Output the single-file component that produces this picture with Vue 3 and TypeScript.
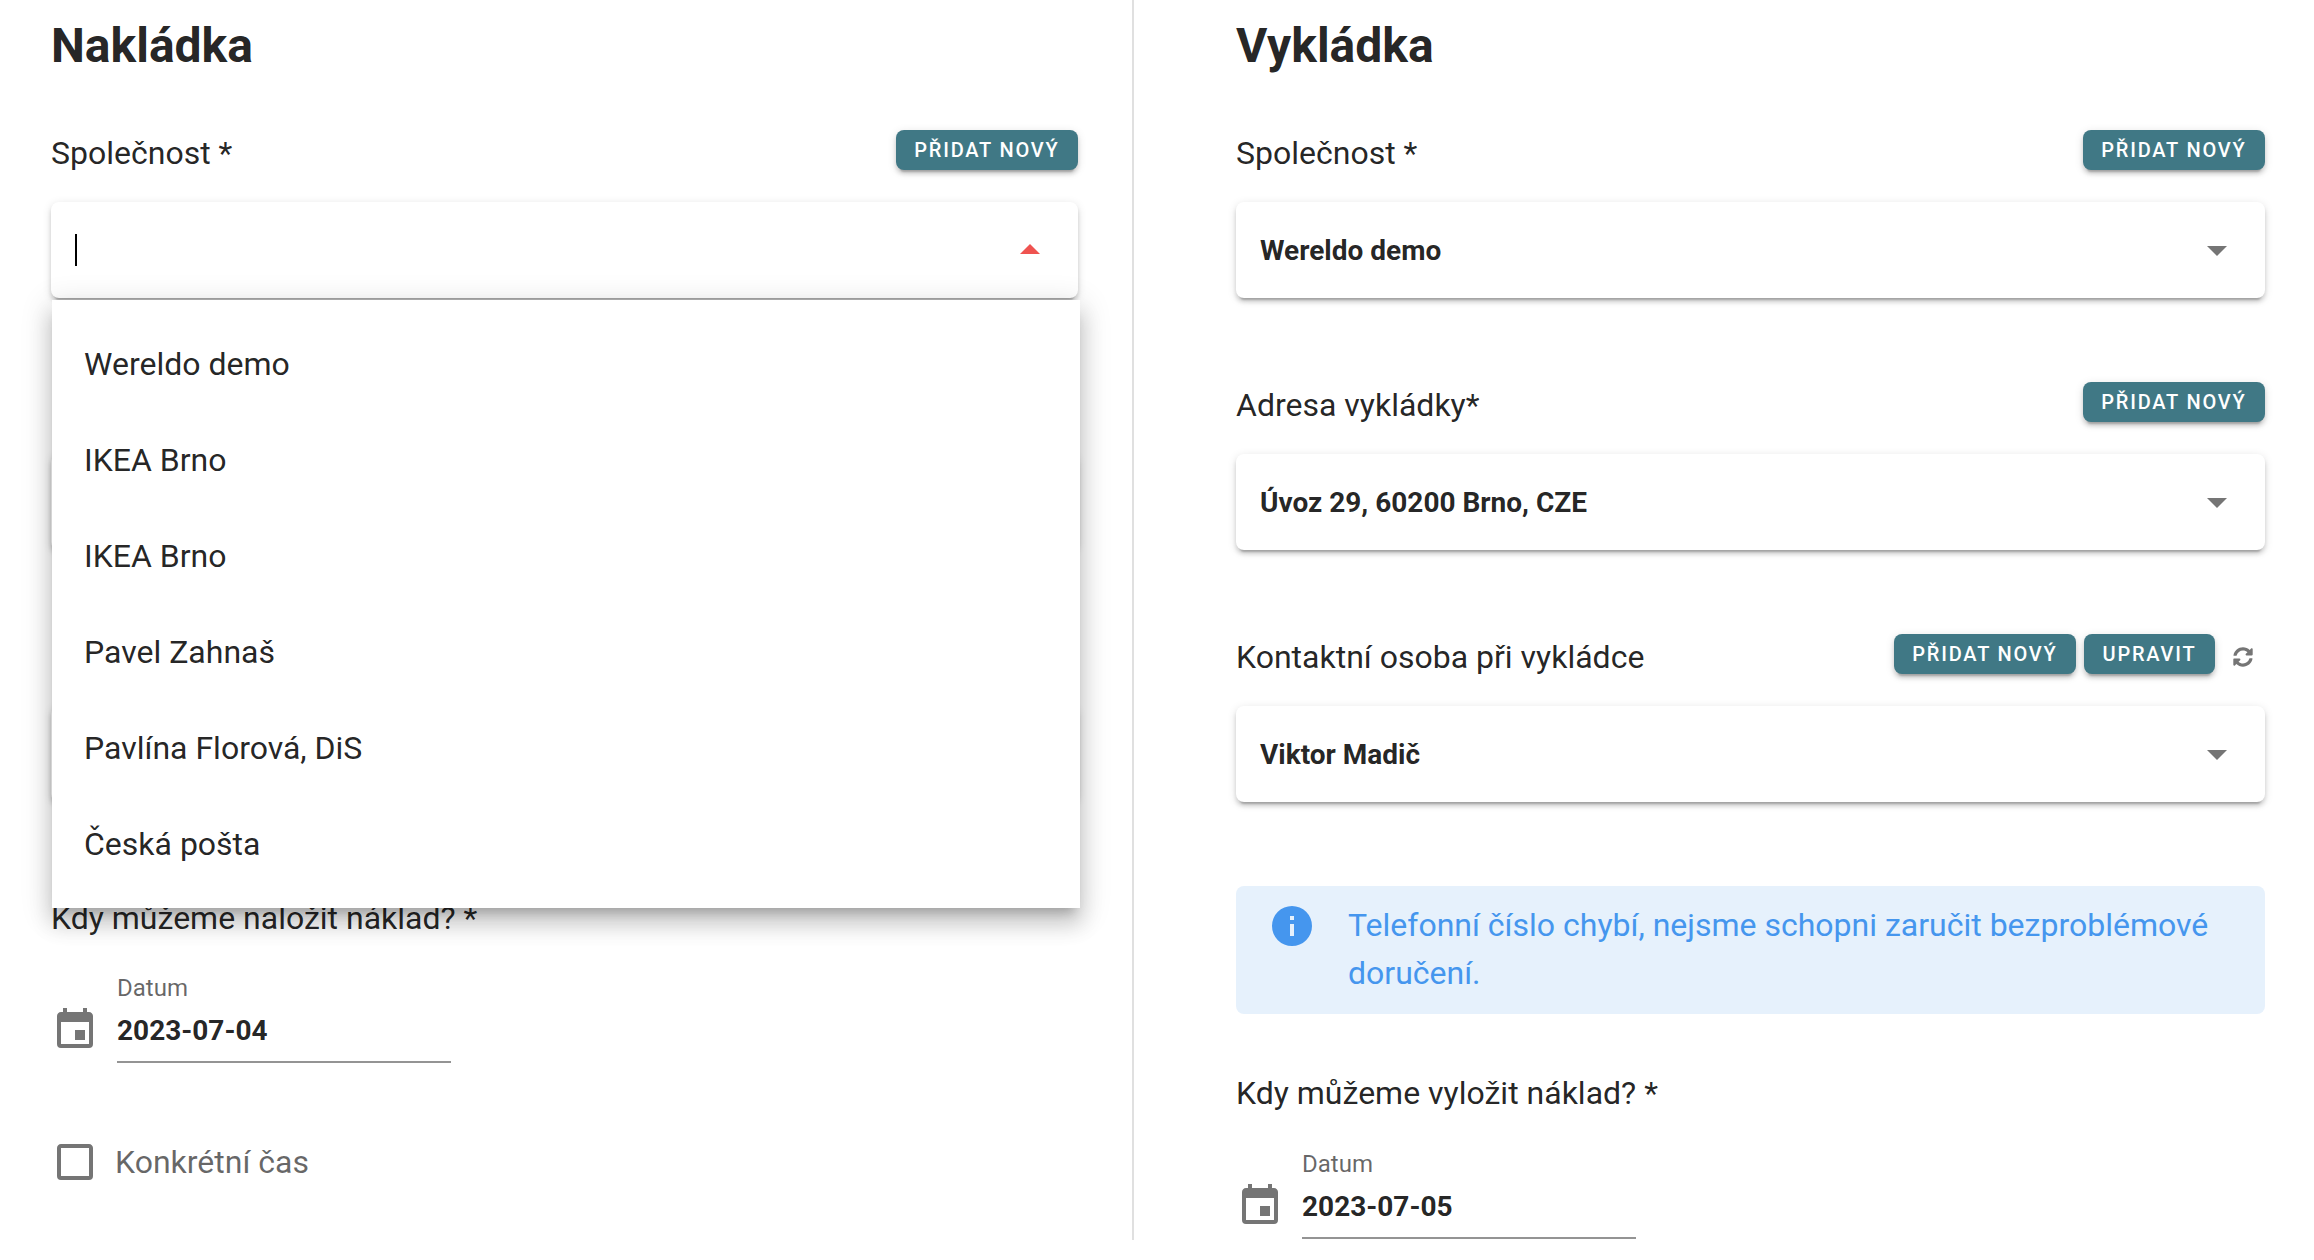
<script setup lang="ts">
type Field = {
  label: string
  value: string
  actions: string[]
  refresh?: boolean
}

const mdiMenuDown = 'M7,10L12,15L17,10H7Z'
const mdiCalendar =
  'M19,19H5V8H19M16,1V3H8V1H6V3H5C3.89,3 3,3.89 3,5V19A2,2 0 0,0 5,21H19A2,2 0 0,0 21,19V5C21,3.89 20.1,3 19,3H18V1M17,12H12V17H17V12Z'
const mdiCheckbox =
  'M19,3H5C3.89,3 3,3.89 3,5V19A2,2 0 0,0 5,21H19A2,2 0 0,0 21,19V5C21,3.89 20.1,3 19,3M19,5V19H5V5H19Z'
const mdiInfo =
  'M13,9H11V7H13M13,17H11V11H13M12,2A10,10 0 0,0 2,12A10,10 0 0,0 12,22A10,10 0 0,0 22,12A10,10 0 0,0 12,2Z'
const syncIcon =
  'M370.72 133.28C339.458 104.008 298.888 87.962 255.848 88c-77.458.068-144.328 53.178-162.791 126.85-1.344 5.363-6.122 9.15-11.651 9.15H24.103c-7.498 0-13.194-6.807-11.807-14.176C33.933 94.924 134.813 8 256 8c66.448 0 126.791 26.136 171.315 68.685L463.03 40.97C478.149 25.851 504 36.559 504 57.941V192c0 13.255-10.745 24-24 24H345.941c-21.382 0-32.09-25.851-16.971-40.971l41.75-41.749zM32 296h134.059c21.382 0 32.09 25.851 16.971 40.971l-41.75 41.75c31.262 29.273 71.835 45.319 114.876 45.28 77.418-.07 144.315-53.144 162.787-126.849 1.344-5.363 6.122-9.15 11.651-9.15h57.304c7.498 0 13.194 6.807 11.807 14.176C478.067 417.076 377.187 504 256 504c-66.448 0-126.791-26.136-171.315-68.685L48.97 471.03C33.851 486.149 8 475.441 8 454.059V320c0-13.255 10.745-24 24-24z'

// the other two pickup fields sit behind the open menu, only their boxes show
const pickupFields: Field[] = [
  { label: 'Společnost *', value: '', actions: ['Přidat nový'] },
  { label: '', value: '', actions: [] },
  { label: '', value: '', actions: [] }
]

const dropoffFields: Field[] = [
  { label: 'Společnost *', value: 'Wereldo demo', actions: ['Přidat nový'] },
  { label: 'Adresa vykládky*', value: 'Úvoz 29, 60200 Brno, CZE', actions: ['Přidat nový'] },
  { label: 'Kontaktní osoba při vykládce', value: 'Viktor Madič', actions: ['Přidat nový', 'Upravit'], refresh: true }
]

const companies = ['Wereldo demo', 'IKEA Brno', 'IKEA Brno', 'Pavel Zahnaš', 'Pavlína Florová, DiS', 'Česká pošta']
</script>

<template>
  <div class="page">
    <section class="column column-left">
      <h1 class="title">Nakládka</h1>

      <div v-for="(field, index) in pickupFields" :key="index" class="field-block">
        <div class="field-head">
          <span class="field-label">{{ field.label }}</span>
          <div class="field-actions">
            <button v-for="action in field.actions" :key="action" class="action-btn">{{ action }}</button>
          </div>
        </div>
        <div class="select-box">
          <span v-if="index === 0" class="caret"></span>
          <svg class="select-arrow" :class="{ open: index === 0 }" viewBox="0 0 24 24"><path :d="mdiMenuDown" /></svg>
        </div>
        <ul v-if="index === 0" class="menu">
          <li v-for="(company, i) in companies" :key="i" class="menu-item">{{ company }}</li>
        </ul>
      </div>

      <div class="when-label when-left">Kdy můžeme naložit náklad? *</div>
      <div class="date-row">
        <svg class="row-icon" viewBox="0 0 24 24"><path :d="mdiCalendar" /></svg>
        <div class="date-field">
          <span class="date-caption">Datum</span>
          <span class="date-value">2023-07-04</span>
        </div>
      </div>
      <label class="check-row">
        <svg class="row-icon" viewBox="0 0 24 24"><path :d="mdiCheckbox" /></svg>
        <span class="check-text">Konkrétní čas</span>
      </label>
    </section>

    <section class="column column-right">
      <h1 class="title">Vykládka</h1>

      <div v-for="field in dropoffFields" :key="field.label" class="field-block">
        <div class="field-head">
          <span class="field-label">{{ field.label }}</span>
          <div class="field-actions">
            <button v-for="action in field.actions" :key="action" class="action-btn">{{ action }}</button>
            <svg v-if="field.refresh" class="refresh-icon" viewBox="0 0 512 512"><path :d="syncIcon" /></svg>
          </div>
        </div>
        <div class="select-box">
          <span class="select-value">{{ field.value }}</span>
          <svg class="select-arrow" viewBox="0 0 24 24"><path :d="mdiMenuDown" /></svg>
        </div>
      </div>

      <div class="alert">
        <svg class="alert-icon" viewBox="0 0 24 24"><path :d="mdiInfo" /></svg>
        <p class="alert-text">Telefonní číslo chybí, nejsme schopni zaručit bezproblémové doručení.</p>
      </div>

      <div class="when-label when-right">Kdy můžeme vyložit náklad? *</div>
      <div class="date-row date-row-right">
        <svg class="row-icon" viewBox="0 0 24 24"><path :d="mdiCalendar" /></svg>
        <div class="date-field">
          <span class="date-caption">Datum</span>
          <span class="date-value">2023-07-05</span>
        </div>
      </div>
    </section>
  </div>
</template>

<style>
html,
body {
  margin: 0;
  background: #fff;
  overflow: hidden;
}
</style>

<style scoped>
.page {
  display: flex;
  width: 2314px;
  height: 1260px;
  overflow: hidden;
  font-family: Roboto, "Liberation Sans", sans-serif;
  color: rgba(0, 0, 0, 0.87);
  background: #fff;
}

.column {
  box-sizing: border-box;
  height: 1240px;
}

.column-left {
  width: 1134px;
  padding: 0 54px 0 51px;
  border-right: 2px solid #e0e0e0;
}

.column-right {
  width: 1180px;
  padding: 0 49px 0 102px;
}

.title {
  margin: 14px 0 0;
  font-size: 48px;
  line-height: 64px;
  font-weight: 700;
}

.field-block {
  position: relative;
  height: 252px;
}

.field-block:first-of-type {
  margin-top: 52px;
}

.field-head {
  display: flex;
  align-items: center;
  justify-content: space-between;
  height: 40px;
}

.field-label {
  font-size: 32px;
  line-height: 48px;
  margin-top: 6px;
}

.field-actions {
  display: flex;
  align-items: center;
  gap: 8px;
}

.action-btn {
  height: 40px;
  padding: 0 18.5px;
  border: 0;
  border-radius: 8px;
  background: #407885;
  color: #fff;
  font-family: inherit;
  font-size: 20px;
  font-weight: 500;
  letter-spacing: 1.8px;
  text-transform: uppercase;
  box-shadow: 0 6px 2px -4px rgba(0, 0, 0, 0.2), 0 4px 4px 0 rgba(0, 0, 0, 0.14), 0 2px 10px 0 rgba(0, 0, 0, 0.12);
}

.refresh-icon {
  width: 20px;
  height: 20px;
  margin: 5px 12px 0 10px;
  fill: #757575;
}

.select-box {
  position: relative;
  display: flex;
  align-items: center;
  height: 96px;
  margin-top: 32px;
  padding: 0 24px;
  border-radius: 8px;
  background: #fff;
  box-shadow: 0 6px 2px -4px rgba(0, 0, 0, 0.2), 0 4px 4px 0 rgba(0, 0, 0, 0.14), 0 2px 10px 0 rgba(0, 0, 0, 0.12);
}

.select-value {
  flex: 1;
  font-size: 28px;
  font-weight: 700;
}

.caret {
  width: 2px;
  height: 32px;
  background: #000;
}

.select-arrow {
  position: absolute;
  right: 24px;
  top: 24px;
  width: 48px;
  height: 48px;
  fill: #757575;
}

.select-arrow.open {
  fill: #ef5350;
  transform: rotate(180deg);
}

.menu {
  position: absolute;
  z-index: 5;
  top: 170px;
  left: 1px;
  width: 1028px;
  margin: 0;
  padding: 16px 0;
  list-style: none;
  background: #fff;
  box-shadow: 0 10px 10px -6px rgba(0, 0, 0, 0.2), 0 16px 20px 2px rgba(0, 0, 0, 0.14), 0 6px 28px 4px rgba(0, 0, 0, 0.12);
}

.menu-item {
  display: flex;
  align-items: center;
  height: 96px;
  padding: 0 32px;
  font-size: 32px;
}

.alert {
  display: flex;
  box-sizing: border-box;
  height: 128px;
  padding: 16px 32px;
  border-radius: 8px;
  background: #e6f1fc;
}

.alert-icon {
  flex: none;
  width: 48px;
  height: 48px;
  margin-right: 32px;
  fill: #4596ee;
}

.alert-text {
  margin: -1px 0 0;
  font-size: 32px;
  line-height: 48px;
  color: #4596ee;
}

.when-label {
  font-size: 32px;
  line-height: 48px;
}

.when-left {
  margin-top: 8px;
}

.when-right {
  margin-top: 55px;
}

.date-row {
  display: flex;
  align-items: flex-start;
  margin-top: 64px;
}

.date-row-right {
  margin-top: 65px;
}

.row-icon {
  flex: none;
  width: 48px;
  height: 48px;
  fill: #757575;
}

.date-field {
  position: relative;
  box-sizing: border-box;
  width: 334px;
  height: 57px;
  margin-left: 18px;
  border-bottom: 2px solid #949494;
}

.date-caption {
  position: absolute;
  left: 0;
  top: -34px;
  font-size: 24px;
  line-height: 32px;
  color: rgba(0, 0, 0, 0.6);
}

.date-value {
  position: absolute;
  left: 0;
  top: 5px;
  font-size: 28px;
  line-height: 40px;
  font-weight: 700;
}

.check-row {
  display: flex;
  align-items: center;
  margin-top: 75px;
}

.check-text {
  margin-left: 16px;
  font-size: 32px;
  color: rgba(0, 0, 0, 0.6);
}
</style>
